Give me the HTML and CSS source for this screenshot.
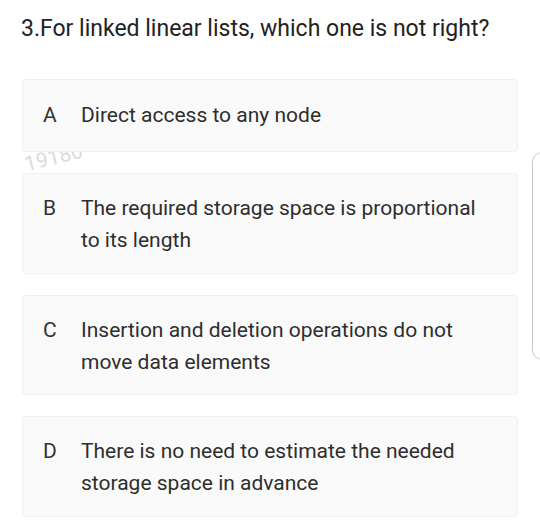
FILE: index.html
```html
<!DOCTYPE html>
<html>
<head>
<meta charset="utf-8">
<link rel="stylesheet" href="styles.css">
</head>
<body>
<div class="page">
  <h1 class="question">3.For linked linear lists, which one is not right?</h1>
  <div class="options">
    <div class="option option-short">
      <span class="letter">A</span>
      <span class="text">Direct access to any node</span>
    </div>
    <div class="option">
      <span class="letter">B</span>
      <span class="text">The required storage space is proportional to its length</span>
    </div>
    <div class="option">
      <span class="letter">C</span>
      <span class="text">Insertion and deletion operations do not move data elements</span>
    </div>
    <div class="option">
      <span class="letter">D</span>
      <span class="text">There is no need to estimate the needed storage space in advance</span>
    </div>
  </div>
  <div class="watermark">19180</div>
  <div class="side-frame"></div>
</div>
</body>
</html>
```
FILE: styles.css
```css
html, body {
  margin: 0;
  padding: 0;
  background: #ffffff;
}
.page {
  position: relative;
  width: 540px;
  height: 520px;
  overflow: hidden;
  font-family: Roboto, "Liberation Sans", sans-serif;
  color: #2b2b2b;
}
.question {
  margin: 0;
  padding: 14px 0 0 21px;
  font-size: 23px;
  font-weight: 400;
  line-height: 30px;
  color: #222222;
}
.options {
  display: flex;
  flex-direction: column;
  gap: 21px;
  margin: 35px 0 0 22px;
  width: 496px;
}
.option {
  position: relative;
  z-index: 1;
  display: flex;
  align-items: flex-start;
  box-sizing: border-box;
  min-height: 100.5px;
  padding: 18px 28px 16px 20px;
  background: #fafafa;
  border: 1px solid #f1f1f1;
  border-radius: 4px;
  font-size: 21px;
  line-height: 32px;
}
.option-short {
  min-height: 73px;
  align-items: center;
  padding-top: 17px;
  padding-bottom: 19px;
}
.letter {
  flex: 0 0 38px;
  color: #333333;
}
.text {
  flex: 1;
  color: #2e2e2e;
}
.watermark {
  position: absolute;
  left: 22px;
  top: 153px;
  font-size: 21px;
  color: #dcdcdc;
  transform: rotate(-14deg);
  transform-origin: left top;
  z-index: 0;
}
.side-frame {
  position: absolute;
  left: 532px;
  top: 152px;
  width: 30px;
  height: 206px;
  border: 1.5px solid #c9c9c9;
  border-radius: 10px;
}
```
